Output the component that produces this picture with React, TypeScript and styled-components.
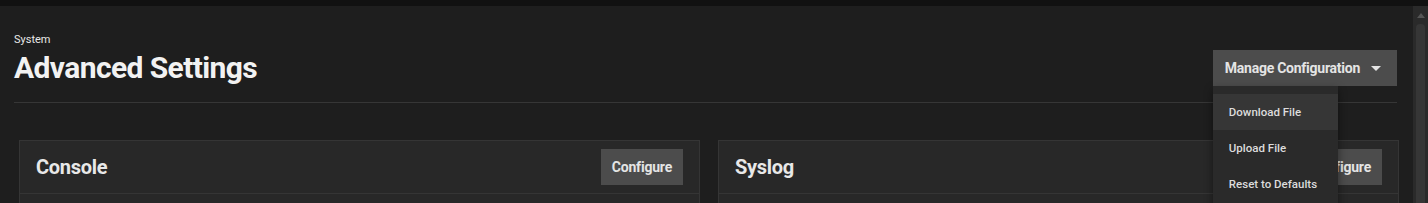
import React from 'react'
import styled, { createGlobalStyle } from 'styled-components'

const GlobalStyle = createGlobalStyle`
  html, body {
    margin: 0;
    padding: 0;
    background: #1e1e1e;
    overflow: hidden;
  }
  body {
    font-family: Roboto, 'Noto Sans', sans-serif;
    color: #e6e6e6;
  }
`

const Frame = styled.div`
  display: flex;
  flex-direction: column;
  width: 1428px;
  height: 203px;
`

const TopBar = styled.div`
  height: 6px;
  background: #111111;
  flex: none;
`

const Body = styled.div`
  display: flex;
  flex: 1;
  min-height: 0;
`

const Main = styled.main`
  flex: 1;
  min-width: 0;
  padding: 0 16px 0 14px;
  overflow: hidden;
`

const PageHeader = styled.header`
  display: flex;
  align-items: flex-start;
  justify-content: space-between;
  padding-top: 27px;
  height: 69px;
  border-bottom: 1px solid #363636;
`

const TitleBlock = styled.div`
  display: flex;
  flex-direction: column;
`

const Breadcrumb = styled.div`
  font-size: 11px;
  line-height: 13px;
  color: #e8e8e8;
`

const Title = styled.h1`
  margin: 5px 0 0;
  font-size: 30px;
  line-height: 34px;
  font-weight: 700;
  letter-spacing: -0.6px;
  color: #f2f2f2;
`

const Actions = styled.div`
  position: relative;
  margin-top: 17px;
`

const Button = styled.button<{ $compact?: boolean }>`
  display: flex;
  align-items: center;
  gap: 11px;
  height: 36px;
  padding: ${(p) => (p.$compact ? '0 11px' : '0 16px 0 12px')};
  border: none;
  border-radius: 0;
  background: #4c4c4c;
  color: #e4e4e4;
  font-family: Roboto, 'Noto Sans', sans-serif;
  font-size: 14px;
  font-weight: 700;
  letter-spacing: ${(p) => (p.$compact ? '-0.2px' : '-0.25px')};
  cursor: pointer;
`

const Caret = styled.span`
  width: 0;
  height: 0;
  border-left: 5px solid transparent;
  border-right: 5px solid transparent;
  border-top: 5px solid #e4e4e4;
`

const Menu = styled.ul`
  position: absolute;
  top: 36px;
  left: 0;
  width: 125px;
  margin: 0;
  padding: 8px 0;
  list-style: none;
  background: #2a2a2a;
  border-radius: 0 0 4px 4px;
  box-shadow: 0 4px 10px rgba(0, 0, 0, 0.45);
  z-index: 5;
`

const MenuItem = styled.li<{ $active?: boolean }>`
  height: 36px;
  display: flex;
  align-items: center;
  padding: 0 16px;
  font-size: 11.5px;
  font-weight: 500;
  color: #dcdcdc;
  white-space: nowrap;
  background: ${(p) => (p.$active ? '#363636' : 'transparent')};
`

const CardGrid = styled.div`
  display: grid;
  grid-template-columns: 1fr 1fr;
  gap: 18px;
  padding: 37px 0 0 5px;
  margin-right: -2px;
`

const Card = styled.section`
  background: #282828;
  border: 1px solid #353535;
  height: 120px;
`

const CardHeader = styled.div`
  display: flex;
  align-items: center;
  justify-content: space-between;
  height: 52px;
  padding: 0 16px;
  border-bottom: 1px solid #353535;
`

const CardTitle = styled.h3`
  margin: 0;
  font-size: 20px;
  font-weight: 700;
  letter-spacing: -0.3px;
  color: #e8e8e8;
`

const Scrollbar = styled.div`
  width: 15px;
  flex: none;
  background: #2a2a2a;
  display: flex;
  flex-direction: column;
  align-items: center;
  padding-top: 7px;
  gap: 6px;
`

const ScrollArrow = styled.span`
  width: 0;
  height: 0;
  border-left: 4px solid transparent;
  border-right: 4px solid transparent;
  border-bottom: 5px solid #555555;
`

const ScrollThumb = styled.div`
  width: 9px;
  flex: 1;
  border-radius: 4px 4px 0 0;
  background: #363636;
`

const menuItems = ['Download File', 'Upload File', 'Reset to Defaults']

const cards = ['Console', 'Syslog']

export default function App() {
  return (
    <>
      <GlobalStyle />
      <Frame>
        <TopBar />
        <Body>
          <Main>
            <PageHeader>
              <TitleBlock>
                <Breadcrumb>System</Breadcrumb>
                <Title>Advanced Settings</Title>
              </TitleBlock>
              <Actions>
                <Button>
                  Manage Configuration
                  <Caret />
                </Button>
                <Menu>
                  {menuItems.map((item, i) => (
                    <MenuItem key={item} $active={i === 0}>
                      {item}
                    </MenuItem>
                  ))}
                </Menu>
              </Actions>
            </PageHeader>
            <CardGrid>
              {cards.map((name) => (
                <Card key={name}>
                  <CardHeader>
                    <CardTitle>{name}</CardTitle>
                    <Button $compact>Configure</Button>
                  </CardHeader>
                </Card>
              ))}
            </CardGrid>
          </Main>
          <Scrollbar>
            <ScrollArrow />
            <ScrollThumb />
          </Scrollbar>
        </Body>
      </Frame>
    </>
  )
}
